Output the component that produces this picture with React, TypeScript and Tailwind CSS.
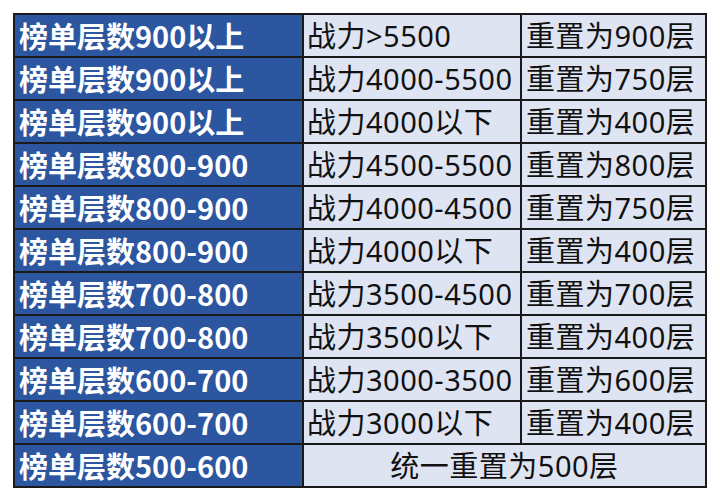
const rows: [string, string, string][] = [
  ['榜单层数900以上', '战力>5500', '重置为900层'],
  ['榜单层数900以上', '战力4000-5500', '重置为750层'],
  ['榜单层数900以上', '战力4000以下', '重置为400层'],
  ['榜单层数800-900', '战力4500-5500', '重置为800层'],
  ['榜单层数800-900', '战力4000-4500', '重置为750层'],
  ['榜单层数800-900', '战力4000以下', '重置为400层'],
  ['榜单层数700-800', '战力3500-4500', '重置为700层'],
  ['榜单层数700-800', '战力3500以下', '重置为400层'],
  ['榜单层数600-700', '战力3000-3500', '重置为600层'],
  ['榜单层数600-700', '战力3000以下', '重置为400层'],
];

const head =
  "bg-[#2d56a0] text-white font-bold text-[29px] leading-none flex items-center pl-[4px] whitespace-nowrap font-['Noto_Sans_CJK_SC','Noto_Sans',sans-serif]";
const cell =
  "bg-[#dfe4f2] text-[#111] text-[29px] leading-none flex items-center whitespace-nowrap tracking-[0.5px] font-['Noto_Sans','Noto_Sans_CJK_SC',sans-serif]";

export default function App() {
  return (
    <div className="w-[720px] h-[500px] bg-white pt-[13px] pl-[13px]">
      <div className="grid grid-cols-[287px_216px_183px] auto-rows-[41px] gap-[2px] p-[2px] bg-[#1a1a1a] w-fit">
        {rows.map(([a, b, c], i) => (
          <div key={i} className="contents">
            <div className={head}>{a}</div>
            <div className={`${cell} pl-[3px]`}>{b}</div>
            <div className={`${cell} pl-[4px]`}>{c}</div>
          </div>
        ))}
        <div className={head}>榜单层数500-600</div>
        <div className={`${cell} col-span-2 justify-center`}>统一重置为500层</div>
      </div>
    </div>
  );
}
